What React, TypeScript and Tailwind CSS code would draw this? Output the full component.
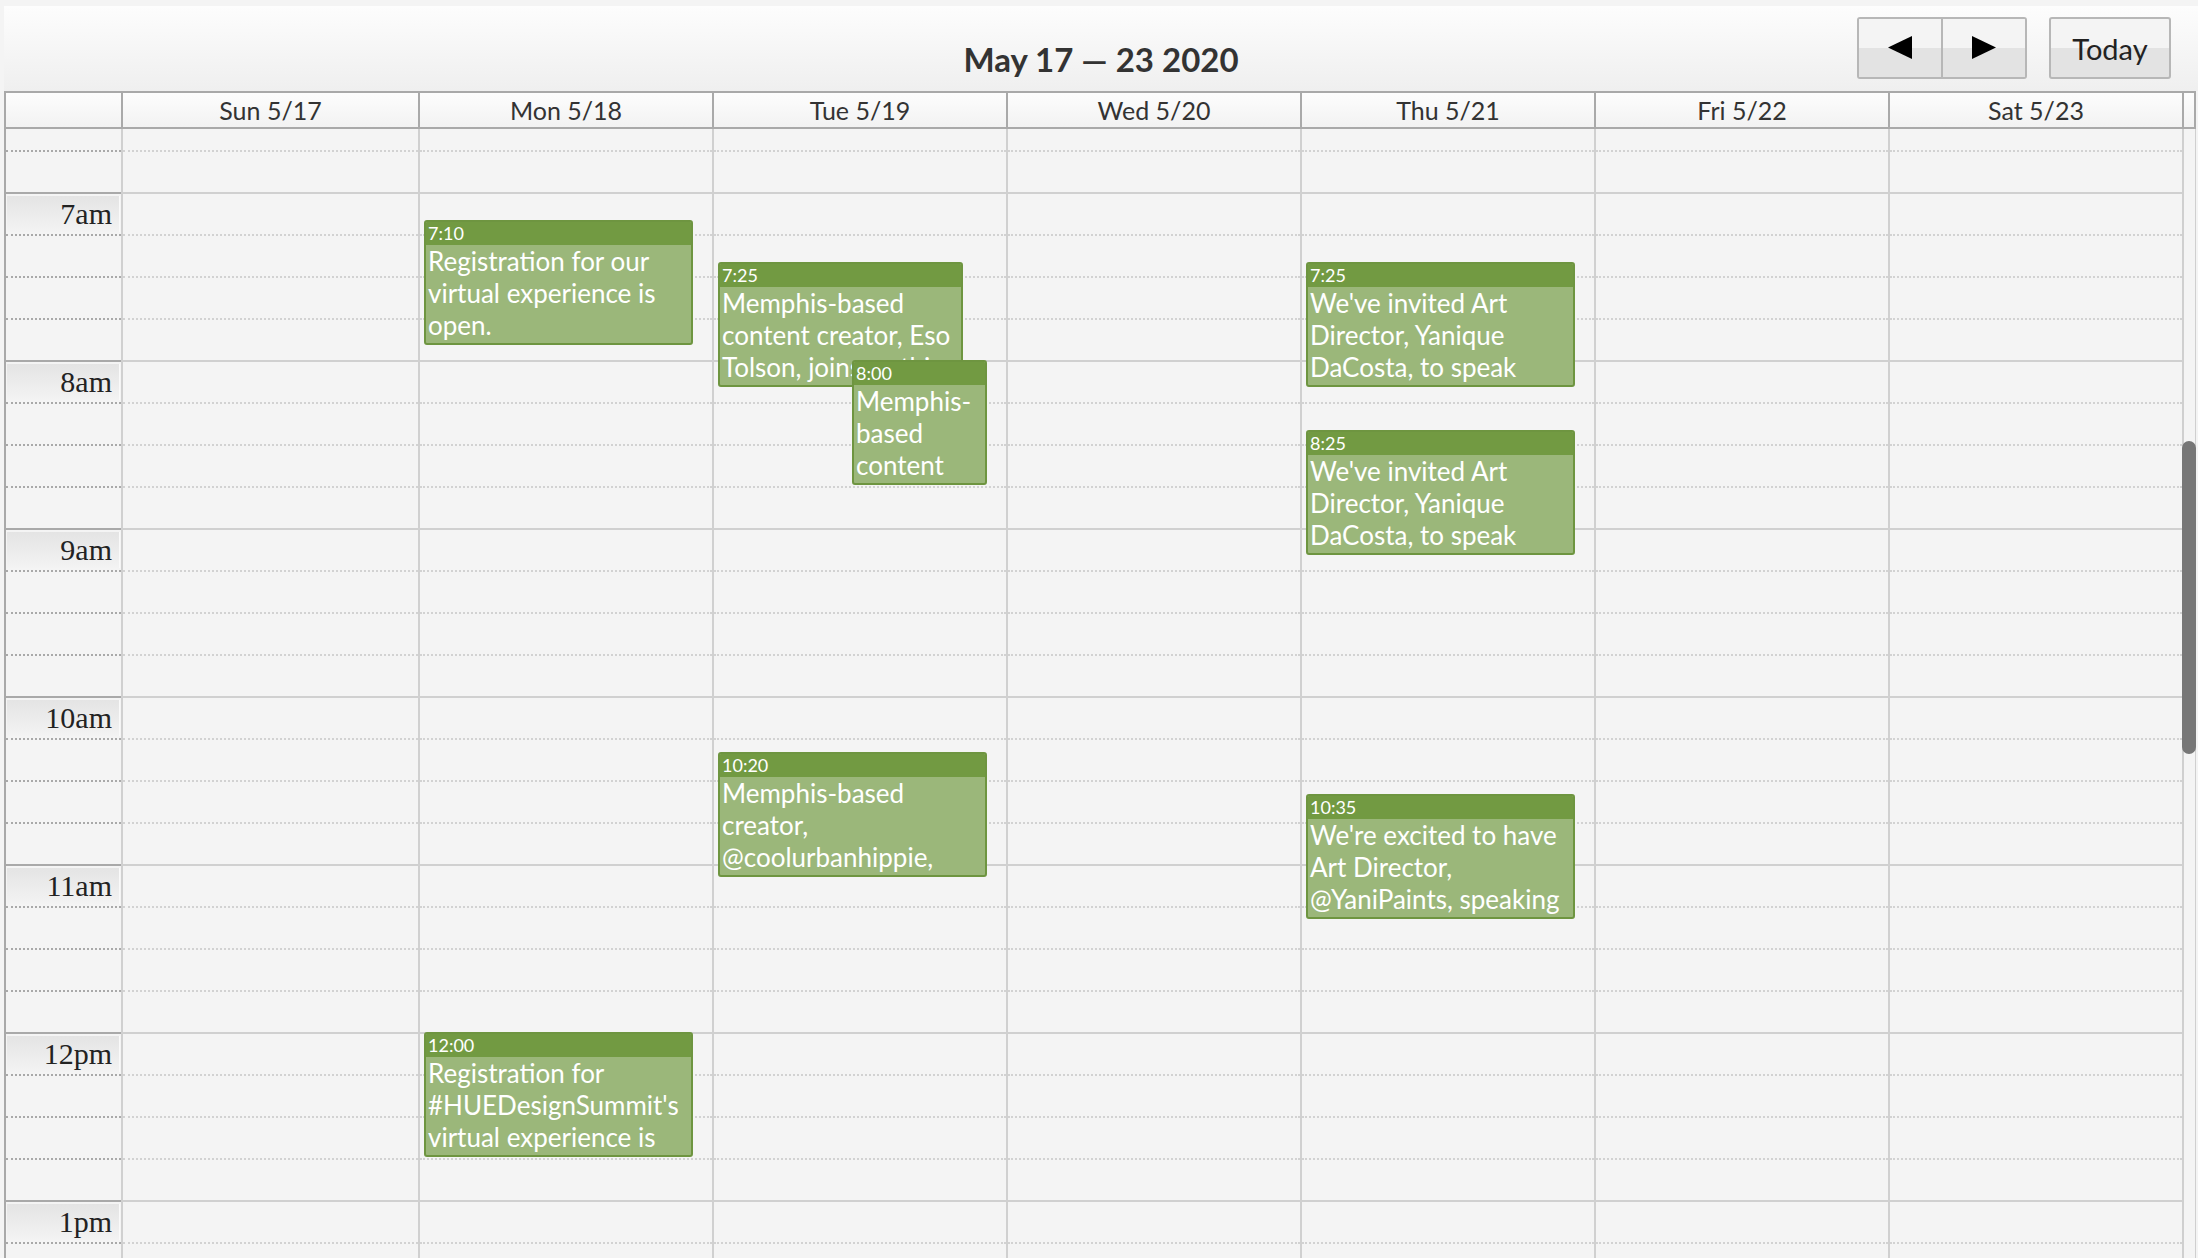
import React from "react";

const days = ["Sun 5/17", "Mon 5/18", "Tue 5/19", "Wed 5/20", "Thu 5/21", "Fri 5/22", "Sat 5/23"];
const hours = ["6am", "7am", "8am", "9am", "10am", "11am", "12pm", "1pm"];
const PX_PER_MIN = 2.8;

type Ev = { day: number; time: string; start: number; left: number; width: number; text: string };

const events: Ev[] = [
  { day: 1, time: "7:10", start: 70, left: 4, width: 269, text: "Registration for our virtual experience is open." },
  { day: 2, time: "7:25", start: 85, left: 4, width: 245, text: "Memphis-based content creator, Eso Tolson, joins us this year to speak" },
  { day: 2, time: "8:00", start: 120, left: 138, width: 135, text: "Memphis-based content creator, Eso Tolson" },
  { day: 2, time: "10:20", start: 260, left: 4, width: 269, text: "Memphis-based creator, @coolurbanhippie, joins us this year" },
  { day: 4, time: "7:25", start: 85, left: 4, width: 269, text: "We've invited Art Director, Yanique DaCosta, to speak virtually at #HUEDesignSummit" },
  { day: 4, time: "8:25", start: 145, left: 4, width: 269, text: "We've invited Art Director, Yanique DaCosta, to speak virtually at #HUEDesignSummit" },
  { day: 4, time: "10:35", start: 275, left: 4, width: 269, text: "We're excited to have Art Director, @YaniPaints, speaking at #HUEDesignSummit" },
  { day: 1, time: "12:00", start: 360, left: 4, width: 269, text: "Registration for #HUEDesignSummit's virtual experience is open." },
];

function HourBlock({ gutter }: { gutter?: boolean }) {
  const solid = gutter ? "border-[#a9a9a9]" : "border-[#d0d0d0]";
  const dotted = gutter ? "border-[#a9a9a9]" : "border-[#d2d2d2]";
  return (
    <div className="flex h-[168px] flex-col">
      <div className={`h-[42px] border-t-2 border-solid ${solid}`} />
      <div className={`h-[42px] border-t-2 border-dotted ${dotted}`} />
      <div className={`h-[42px] border-t-2 border-dotted ${dotted}`} />
      <div className={`h-[42px] border-t-2 border-dotted ${dotted}`} />
    </div>
  );
}

function Event({ ev }: { ev: Ev }) {
  return (
    <div
      className="absolute flex flex-col overflow-hidden rounded-[3px] border-2 border-[#6e9540] bg-[#9bb77a] text-white"
      style={{ top: ev.start * PX_PER_MIN, left: ev.left, width: ev.width, height: 125 }}
    >
      <div className="h-[23px] shrink-0 bg-[#729a42] pl-[2px] text-[18px] leading-[23px]">{ev.time}</div>
      <div className="px-[2px] text-[26px] leading-[32px]">{ev.text}</div>
    </div>
  );
}

function NavButton({ dir }: { dir: "prev" | "next" }) {
  return (
    <button className="flex flex-1 items-center justify-center bg-[linear-gradient(#f4f4f4_50%,#e3e3e3_50%)]">
      <svg width="24" height="24" viewBox="0 0 24 24">
        {dir === "prev" ? <polygon points="24,0 24,23 0,11.5" fill="#000" /> : <polygon points="0,0 0,23 24,11.5" fill="#000" />}
      </svg>
    </button>
  );
}

export default function App() {
  const widths = [297, 294, 294, 294, 294, 294, 294];
  return (
    <div
      className="flex h-[1258px] w-[2198px] flex-col overflow-hidden bg-[#f4f4f4] pl-[4px] pt-[6px] text-[#333]"
      style={{ fontFamily: "Lato, 'Open Sans', sans-serif" }}
    >
      {/* toolbar */}
      <div className="grid h-[85px] shrink-0 grid-cols-[1fr_auto_1fr] bg-[linear-gradient(#fdfdfd,#efefef)]">
        <div />
        <div className="mt-[37px] text-[33px] font-bold leading-none text-[#333]">May 17 — 23 2020</div>
        <div className="flex items-start justify-end gap-[22px] pr-[27px] pt-[11px]">
          <div className="flex h-[62px] w-[170px] overflow-hidden rounded-[3px] border-2 border-[#b7b7b7]">
            <NavButton dir="prev" />
            <div className="w-[2px] bg-[#b7b7b7]" />
            <NavButton dir="next" />
          </div>
          <button className="h-[62px] w-[122px] rounded-[3px] border-2 border-[#b7b7b7] bg-[linear-gradient(#f4f4f4_50%,#e3e3e3_50%)] text-[29px] leading-none text-[#222]">
            Today
          </button>
        </div>
      </div>

      {/* header row */}
      <div className="flex h-[38px] w-[2192px] shrink-0 border-y-2 border-[#a9a9a9] bg-[linear-gradient(#fdfdfd,#f2f2f2)]">
        <div className="w-[117px] border-l-2 border-[#a9a9a9]" />
        {days.map((d, i) => (
          <div
            key={d}
            className="flex items-center justify-center border-l-2 border-[#a9a9a9] text-[25px] leading-none text-[#333]"
            style={{ width: widths[i] }}
          >
            {d}
          </div>
        ))}
        <div className="w-[14px] border-x-2 border-[#a9a9a9]" />
      </div>

      {/* body */}
      <div className="flex min-h-0 w-[2192px] flex-1 overflow-hidden">
        {/* gutter */}
        <div className="w-[117px] border-l-2 border-[#a9a9a9]">
          <div className="mt-[-105px]">
            {hours.map((h) => (
              <div key={h} className="relative">
                <HourBlock gutter />
                <div
                  className="absolute left-[1px] right-[1px] top-[4px] flex h-[36px] items-center justify-end border-r border-[#fafafa] bg-[linear-gradient(#e4e4e4,#f3f3f3)] pr-[7px] text-[30px] leading-none text-[#222]"
                  style={{ fontFamily: "'Liberation Serif', 'DejaVu Serif', serif" }}
                >
                  {h}
                </div>
              </div>
            ))}
          </div>
        </div>

        {days.map((d, i) => (
          <div key={d} className="border-l-2 border-[#d0d0d0]" style={{ width: widths[i] }}>
            <div className="relative mt-[-105px]">
              {hours.map((h) => (
                <HourBlock key={h} />
              ))}
              {events
                .filter((e) => e.day === i)
                .map((e, k) => (
                  <Event key={k} ev={e} />
                ))}
            </div>
          </div>
        ))}

        {/* scrollbar */}
        <div className="relative w-[14px] border-l-2 border-r border-[#cfcfcf]">
          <div className="absolute left-[-2px] right-[-1px] top-[312px] h-[313px] rounded-full bg-[#777]" />
        </div>
      </div>
    </div>
  );
}
